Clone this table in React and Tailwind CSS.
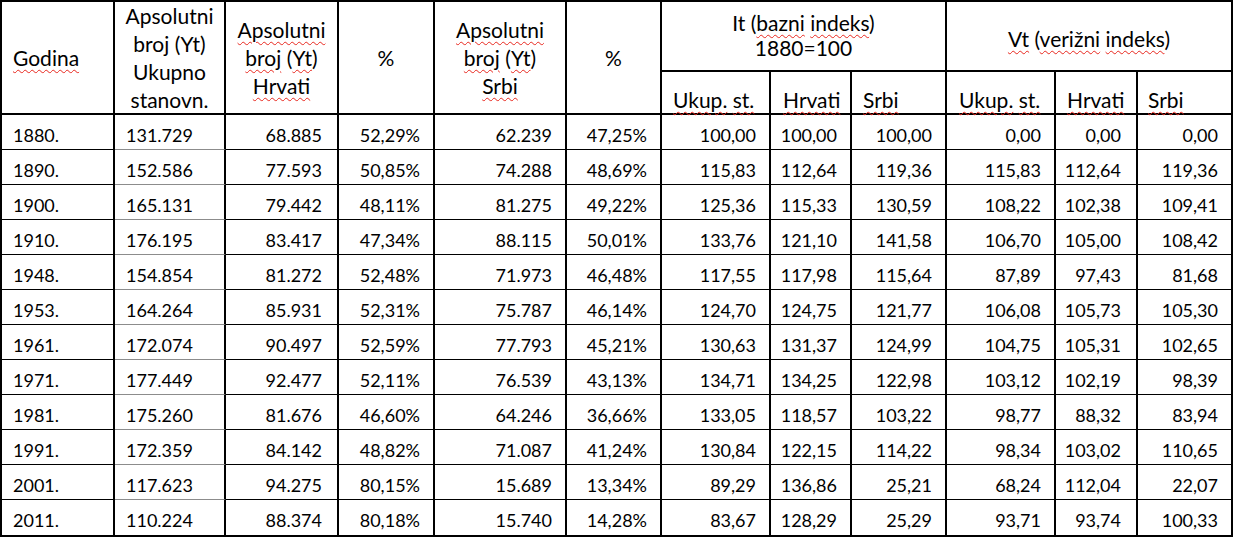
const rows = [
  ["1880.", "131.729", "68.885", "52,29%", "62.239", "47,25%", "100,00", "100,00", "100,00", "0,00", "0,00", "0,00"],
  ["1890.", "152.586", "77.593", "50,85%", "74.288", "48,69%", "115,83", "112,64", "119,36", "115,83", "112,64", "119,36"],
  ["1900.", "165.131", "79.442", "48,11%", "81.275", "49,22%", "125,36", "115,33", "130,59", "108,22", "102,38", "109,41"],
  ["1910.", "176.195", "83.417", "47,34%", "88.115", "50,01%", "133,76", "121,10", "141,58", "106,70", "105,00", "108,42"],
  ["1948.", "154.854", "81.272", "52,48%", "71.973", "46,48%", "117,55", "117,98", "115,64", "87,89", "97,43", "81,68"],
  ["1953.", "164.264", "85.931", "52,31%", "75.787", "46,14%", "124,70", "124,75", "121,77", "106,08", "105,73", "105,30"],
  ["1961.", "172.074", "90.497", "52,59%", "77.793", "45,21%", "130,63", "131,37", "124,99", "104,75", "105,31", "102,65"],
  ["1971.", "177.449", "92.477", "52,11%", "76.539", "43,13%", "134,71", "134,25", "122,98", "103,12", "102,19", "98,39"],
  ["1981.", "175.260", "81.676", "46,60%", "64.246", "36,66%", "133,05", "118,57", "103,22", "98,77", "88,32", "83,94"],
  ["1991.", "172.359", "84.142", "48,82%", "71.087", "41,24%", "130,84", "122,15", "114,22", "98,34", "103,02", "110,65"],
  ["2001.", "117.623", "94.275", "80,15%", "15.689", "13,34%", "89,29", "136,86", "25,21", "68,24", "112,04", "22,07"],
  ["2011.", "110.224", "88.374", "80,18%", "15.740", "14,28%", "83,67", "128,29", "25,29", "93,71", "93,74", "100,33"],
]

// spellcheck squiggle under a word
function W({ children }) {
  return (
    <span className="underline decoration-wavy decoration-[#e8281f] decoration-1 underline-offset-[3px]">
      {children}
    </span>
  )
}

function DataCell({ value, col, last }) {
  const align = col < 2 ? "justify-start pl-[11px]" : "justify-end"
  const pad = col === 2 || col === 10 ? "pr-[15px]" : col >= 2 ? "pr-[13px]" : ""
  const bottom = last ? "border-b-2 border-b-black h-[37px] pb-[3px]" : col === 1 ? "border-b border-b-[#8c8c8c] h-[35px] pb-[2px]" : "border-b border-b-black h-[35px] pb-[2px]"
  return (
    <div className={`flex items-end border-r-2 border-r-black ${bottom} ${align} ${pad}`}>
      {value}
    </div>
  )
}

export default function App() {
  return (
    <div className="bg-white w-[1235px] h-[537px] overflow-hidden text-[18px] leading-[24px] text-black" style={{ fontFamily: "Lato, 'Liberation Sans', sans-serif" }}>
      <div className="w-[1233px] border-t-2 border-l-2 border-black grid grid-cols-[113px_111px_113px_96px_132px_95px_109px_81px_95px_109px_82px_95px] grid-rows-[70px_43px]">
        {/* header */}
        <div className="row-span-2 border-r-2 border-b-2 border-black flex items-center pl-[11px] text-[21px]">
          <W>Godina</W>
        </div>
        <div className="row-span-2 border-r-2 border-b-2 border-black flex flex-col items-center justify-center text-center text-[21px] leading-[28px]">
          <span>Apsolutni</span>
          <span>broj (Yt)</span>
          <span>Ukupno</span>
          <span>stanovn.</span>
        </div>
        <div className="row-span-2 border-r-2 border-b-2 border-black flex flex-col items-center justify-center text-center text-[21px] leading-[28px]">
          <span><W>Apsolutni</W></span>
          <span><W>broj</W> (<W>Yt</W>)</span>
          <span><W>Hrvati</W></span>
        </div>
        <div className="row-span-2 border-r-2 border-b-2 border-black flex items-center justify-center text-[21px]">%</div>
        <div className="row-span-2 border-r-2 border-b-2 border-black flex flex-col items-center justify-center text-center text-[21px] leading-[28px]">
          <span><W>Apsolutni</W></span>
          <span><W>broj</W> (<W>Yt</W>)</span>
          <span><W>Srbi</W></span>
        </div>
        <div className="row-span-2 border-r-2 border-b-2 border-black flex items-center justify-center text-[21px]">%</div>
        <div className="col-span-3 border-r-2 border-b-2 border-black flex flex-col items-center justify-center text-center text-[21px] leading-[25px] pb-[3px]">
          <span>It (<W>bazni</W> <W>indeks</W>)</span>
          <span>1880=100</span>
        </div>
        <div className="col-span-3 border-r-2 border-b-2 border-black flex items-center justify-center text-[21px] pt-[6px]">
          <span><W>Vt</W> (<W>verižni</W> <W>indeks</W>)</span>
        </div>
        <div className="border-r-2 border-b-2 border-black flex items-end pl-[11px] pb-[1px] text-[21px]"><span><W>Ukup.</W> <W>st.</W></span></div>
        <div className="border-r-2 border-b-2 border-black flex items-end pl-[12px] pb-[1px] text-[21px]"><W>Hrvati</W></div>
        <div className="border-r-2 border-b-2 border-black flex items-end pl-[11px] pb-[1px] text-[21px]"><W>Srbi</W></div>
        <div className="border-r-2 border-b-2 border-black flex items-end pl-[12px] pb-[1px] text-[21px]"><span><W>Ukup.</W> <W>st.</W></span></div>
        <div className="border-r-2 border-b-2 border-black flex items-end pl-[11px] pb-[1px] text-[21px]"><W>Hrvati</W></div>
        <div className="border-r-2 border-b-2 border-black flex items-end pl-[10px] pb-[1px] text-[21px]"><W>Srbi</W></div>

        {/* body */}
        {rows.map((r, i) =>
          r.map((v, j) => (
            <DataCell key={i + "-" + j} value={v} col={j} last={i === rows.length - 1} />
          ))
        )}
      </div>
    </div>
  )
}
